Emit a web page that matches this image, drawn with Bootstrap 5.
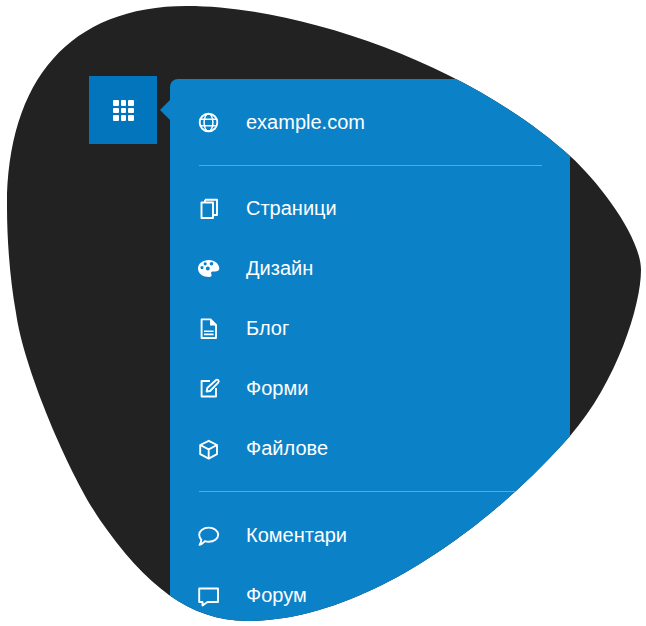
<!DOCTYPE html>
<html lang="bg">
<head>
<meta charset="utf-8">
<title>Меню</title>
<link href="https://cdn.jsdelivr.net/npm/bootstrap@5.3.0/dist/css/bootstrap.min.css" rel="stylesheet">
<style>
html,body{margin:0;background:#fff;overflow:hidden}
.blob-stage{width:646px;height:626px;background:#222;overflow:hidden;padding:76px 0 0 89px;
  clip-path:path("M187 6 C300 6 470 65 570 156 C600 183 641 238 641 270 C641 305 617 382 570 436 C500 516 370 621 247 621 C190 621 145 585 100 520 C70 476 24 370 16 313 C10 280 7 240 7 207 C7 80 70 6 187 6 Z");
  font-family:"Liberation Sans",Arial,sans-serif}
.apps-toggle{width:68px;height:68px;flex:none;background:#0275bc;border:0;border-radius:0;
  display:grid;grid-template-columns:repeat(3,5.6px);gap:2.1px;justify-content:center;align-content:center;padding:1px 0 0 1px}
.apps-dot{width:5.6px;height:5.6px;background:#fff;border-radius:1px;display:block}
.menu-panel{position:relative;width:400px;height:700px;flex:none;margin:3px 0 0 13px;padding:13px 28px 0 29px;background:#0b82c8;border-radius:8px 0 0 0}
.menu-panel::before{content:"";position:absolute;left:-10px;top:21px;border-style:solid;border-width:10px 10px 10px 0;border-color:transparent #0b82c8 transparent transparent}
.menu-link{height:60px;color:#fff;font-size:20px;line-height:24px;text-decoration:none}
.menu-link:hover{color:#fff}
.menu-glyph{width:24px;height:24px;margin:0 25px 0 -2px;flex:none;fill:none;stroke:#fff;stroke-width:1.9;stroke-linejoin:round}
.glyph-solid{fill:#fff;stroke:none}
.menu-rule{margin:13px 0;height:1px;border:0;background:#56a8de;opacity:1}
.rule-tight{margin-bottom:12px}
</style>
</head>
<body>
<div class="blob-stage d-flex align-items-start">
  <button class="apps-toggle" type="button" aria-label="Меню">
    <span class="apps-dot"></span><span class="apps-dot"></span><span class="apps-dot"></span>
    <span class="apps-dot"></span><span class="apps-dot"></span><span class="apps-dot"></span>
    <span class="apps-dot"></span><span class="apps-dot"></span><span class="apps-dot"></span>
  </button>
  <nav class="menu-panel">
    <a class="menu-link d-flex align-items-center" href="#">
      <svg class="menu-glyph" viewBox="0 0 24 24"><circle cx="11.5" cy="12.5" r="8.8"/><ellipse cx="11.5" cy="12.5" rx="4.4" ry="8.8" stroke-width="1.5"/><path d="M3.4 9.2H19.6M3.4 15.8H19.6" stroke-width="1.5"/></svg>
      <span>example.com</span>
    </a>
    <hr class="menu-rule rule-tight">
    <a class="menu-link d-flex align-items-center" href="#">
      <svg class="menu-glyph" viewBox="0 0 24 24"><path d="M4.5 6.5H16V22H4.5Z"/><path d="M8 3.8H20V19H16"/><path d="M8 3.8V6.5"/></svg>
      <span>Страници</span>
    </a>
    <a class="menu-link d-flex align-items-center" href="#">
      <svg class="menu-glyph glyph-solid" viewBox="0 0 24 24"><path fill-rule="evenodd" d="M12 4C17.5 4 22.3 8 22.3 12.5C22.3 14.5 20.5 15.5 18 15.5H15.8C14 15.5 13.6 17 14.3 18C15 19 14.6 21 12 21C6 21 1 17.5 1 12.5C1 7.5 6 4 12 4ZM5 10a1.6 1.6 0 1 0 0 3.2a1.6 1.6 0 1 0 0-3.2ZM8.2 6.2a1.6 1.6 0 1 0 0 3.2a1.6 1.6 0 1 0 0-3.2ZM14.5 6a1.8 1.8 0 1 0 0 3.6a1.8 1.8 0 1 0 0-3.6ZM10.8 10.6a2 2 0 1 0 0 4a2 2 0 1 0 0-4Z"/></svg>
      <span>Дизайн</span>
    </a>
    <a class="menu-link d-flex align-items-center" href="#">
      <svg class="menu-glyph" viewBox="0 0 24 24"><path d="M4.6 3.4H13.5L19 9V22H4.6Z"/><path class="glyph-solid" d="M13 3.4V9.6H19Z"/><path d="M7 15.2H16.6M7 18.4H16.6" stroke-width="1.6"/></svg>
      <span>Блог</span>
    </a>
    <a class="menu-link d-flex align-items-center" href="#">
      <svg class="menu-glyph" viewBox="0 0 24 24"><path d="M13 5H4.6V20.5H19V12"/><path d="M9.6 15.6L10.3 12L18.8 4.2A1.6 1.6 0 0 1 21.2 6.6L13.1 15Z"/></svg>
      <span>Форми</span>
    </a>
    <a class="menu-link d-flex align-items-center" href="#">
      <svg class="menu-glyph" viewBox="0 0 24 24"><path d="M11.7 4.8L20 9V18.2L11.7 22.6L3.2 18.2V9Z"/><path d="M3.2 9L11.7 13.4L20 9M11.7 13.4V22.6"/></svg>
      <span>Файлове</span>
    </a>
    <hr class="menu-rule">
    <a class="menu-link d-flex align-items-center" href="#">
      <svg class="menu-glyph" viewBox="0 0 24 24"><path d="M11.7 4.6C17 4.6 21.2 7.8 21.2 11.8C21.2 15.8 17 18.8 11.7 18.8C10.3 18.8 9 18.6 7.8 18.2C6.5 19.5 4.6 21.6 2.6 21.8C3.6 20.4 4.2 18.4 4.3 16.6C3 15.3 2.2 13.6 2.2 11.8C2.2 7.8 6.4 4.6 11.7 4.6Z"/></svg>
      <span>Коментари</span>
    </a>
    <a class="menu-link d-flex align-items-center" href="#">
      <svg class="menu-glyph" viewBox="0 0 24 24"><path d="M2.2 5.5H21V19H10.5L5.5 22.5V19H2.2Z"/></svg>
      <span>Форум</span>
    </a>
  </nav>
</div>
<script src="https://cdn.jsdelivr.net/npm/bootstrap@5.3.0/dist/js/bootstrap.bundle.min.js"></script>
</body>
</html>
